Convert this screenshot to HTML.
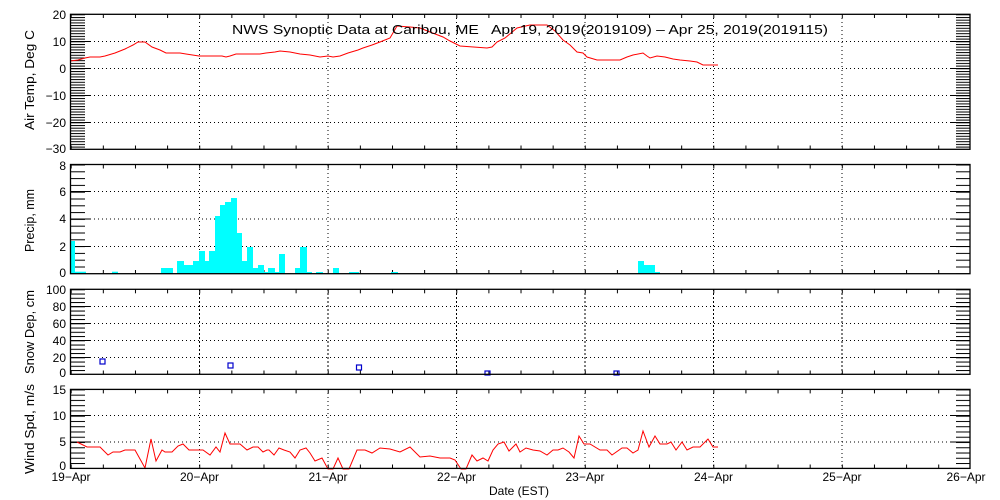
<!DOCTYPE html>
<html><head><meta charset="utf-8"><style>
html,body{margin:0;padding:0;background:#fff;}
svg{display:block;font-family:"Liberation Sans",sans-serif;}
text{font-size:12px;fill:#000;}
</style></head><body>
<svg width="1000" height="500" viewBox="0 0 1000 500" xmlns="http://www.w3.org/2000/svg">
<defs>
<pattern id="p1" patternUnits="userSpaceOnUse" x="0" y="14.3" width="20" height="2.7"><rect x="0" y="0" width="20" height="1" fill="#000"/></pattern>
<pattern id="p2" patternUnits="userSpaceOnUse" x="0" y="164.5" width="20" height="6.8"><rect x="0" y="0" width="20" height="1" fill="#000"/></pattern>
<pattern id="p3" patternUnits="userSpaceOnUse" x="0" y="289.3" width="20" height="4.25"><rect x="0" y="0" width="20" height="1" fill="#000"/></pattern>
<pattern id="p4" patternUnits="userSpaceOnUse" x="0" y="389.4" width="20" height="5.26"><rect x="0" y="0" width="20" height="1" fill="#000"/></pattern>
<pattern id="xt" patternUnits="userSpaceOnUse" x="70.7" y="0" width="32.13" height="10"><rect x="0" y="0" width="1" height="10" fill="#000"/></pattern>
</defs>

<rect x="71" y="14.3" width="14" height="135" fill="url(#p1)"/>
<rect x="956" y="14.3" width="14" height="135" fill="url(#p1)"/>
<rect x="71" y="164.5" width="14" height="109" fill="url(#p2)"/>
<rect x="956" y="164.5" width="14" height="109" fill="url(#p2)"/>
<rect x="71" y="289.3" width="14" height="85" fill="url(#p3)"/>
<rect x="956" y="289.3" width="14" height="85" fill="url(#p3)"/>
<rect x="71" y="389.4" width="14" height="79" fill="url(#p4)"/>
<rect x="956" y="389.4" width="14" height="79" fill="url(#p4)"/>

<rect x="70" y="14" width="900" height="4" fill="url(#xt)"/>
<rect x="70" y="145.5" width="900" height="4" fill="url(#xt)"/>
<rect x="70" y="164.5" width="900" height="4" fill="url(#xt)"/>
<rect x="70" y="270" width="900" height="4" fill="url(#xt)"/>
<rect x="70" y="289.3" width="900" height="4" fill="url(#xt)"/>
<rect x="70" y="370.5" width="900" height="4" fill="url(#xt)"/>
<rect x="70" y="389.4" width="900" height="4" fill="url(#xt)"/>
<rect x="70" y="464.5" width="900" height="4" fill="url(#xt)"/>

<g stroke="#000" stroke-width="1" stroke-dasharray="1,3" fill="none">
<path d="M70 41.5H970M70 68.5H970M70 95.5H970M70 122.5H970"/>
<path d="M70 191.5H970M70 219H970M70 246.5H970"/>
<path d="M70 306.5H970M70 323.5H970M70 340.5H970M70 357.5H970"/>
<path d="M70 415.5H970M70 442H970"/>
<path d="M199.5 14V149M328 14V149M456.5 14V149M585 14V149M713.5 14V149M842 14V149"/>
<path d="M199.5 165V274M328 165V274M456.5 165V274M585 165V274M713.5 165V274M842 165V274"/>
<path d="M199.5 389V468M328 389V468M456.5 389V468M585 389V468M713.5 389V468M842 389V468"/>
</g>
<g stroke="#000" stroke-width="1" stroke-dasharray="2,2" fill="none">
<path d="M199.5 289V374M328 289V374M456.5 289V374M585 289V374M713.5 289V374M842 289V374"/>
</g>

<g stroke="#000" stroke-width="1">
<path d="M70 41.5h20M70 68.5h20M70 95.5h20M70 122.5h20M950 41.5h20M950 68.5h20M950 95.5h20M950 122.5h20"/>
<path d="M70 191.5h20M70 219h20M70 246.5h20M950 191.5h20M950 219h20M950 246.5h20"/>
<path d="M70 306.5h20M70 323.5h20M70 340.5h20M70 357.5h20M950 306.5h20M950 323.5h20M950 340.5h20M950 357.5h20"/>
<path d="M70 415.5h20M70 442h20M950 415.5h20M950 442h20"/>
</g>

<g fill="#00ffff">
<rect x="70" y="241" width="5" height="33"/>
<rect x="75" y="271.7" width="11" height="2"/>
<rect x="112" y="271.7" width="6" height="2"/>
<rect x="161" y="268" width="12" height="6"/>
<rect x="177" y="261" width="7" height="13"/>
<rect x="184" y="265" width="9" height="9"/>
<rect x="193" y="261" width="6" height="13"/>
<rect x="199" y="251" width="6" height="23"/>
<rect x="205" y="261" width="4" height="13"/>
<rect x="209" y="251" width="6" height="23"/>
<rect x="215" y="216" width="5" height="58"/>
<rect x="220" y="205" width="5" height="69"/>
<rect x="225" y="202" width="6" height="72"/>
<rect x="231" y="198" width="6" height="76"/>
<rect x="237" y="233" width="5" height="41"/>
<rect x="242" y="261" width="5" height="13"/>
<rect x="247" y="247" width="6" height="27"/>
<rect x="253" y="268" width="5" height="6"/>
<rect x="258" y="265" width="6" height="9"/>
<rect x="264" y="272" width="4" height="2"/>
<rect x="268" y="268" width="7" height="6"/>
<rect x="275" y="272" width="4" height="2"/>
<rect x="279" y="254" width="6" height="20"/>
<rect x="295" y="268" width="5" height="6"/>
<rect x="300" y="247" width="7" height="27"/>
<rect x="307" y="272" width="5" height="2"/>
<rect x="316" y="272" width="7" height="2"/>
<rect x="333" y="268" width="6" height="6"/>
<rect x="349" y="272" width="10" height="2"/>
<rect x="391" y="272" width="7" height="2"/>
<rect x="638" y="261" width="6" height="13"/>
<rect x="644" y="265" width="11" height="9"/>
<rect x="655" y="272" width="5" height="2"/>
</g>

<polyline fill="none" stroke="#ff0000" stroke-width="1" points="70,61 78,60 85,58 90,57 100,57 105,56 115,53 125,49 133,45 138,42 145,42 152,47 160,50 166,53 180,53 186,54 199,56 222,56 226,57 230,56 236,54 260,54 266,53 275,52 280,51 290,52 300,54 310,55 320,57 328,56 333,57 340,56 348,53 358,50 363,48 372,45 380,42 390,38 397,26 410,27 420,28 430,32 443,37 450,41 460,46 487,48 492,47 497,42 505,38 517,28 530,25 547,25 555,31 563,40 570,45 577,52 583,53 587,57 597,60 620,60 627,57 633,55 643,53 647,56 650,58 657,56 665,57 673,59 680,60 690,61 697,62 703,65 718,65"/>

<g fill="none" stroke="#0000cc" stroke-width="1.2">
<rect x="100" y="359" width="5" height="5"/>
<rect x="228" y="363" width="5" height="5"/>
<rect x="356.5" y="365" width="5" height="5"/>
<rect x="485" y="371" width="5" height="4"/>
<rect x="614" y="371" width="5" height="4"/>
</g>

<polyline fill="none" stroke="#ff0000" stroke-width="1" points="77,442 87,447 100,447 108,455 113,452 120,452 125,450 135,450 145,468 151,439 156,461 162,450 165,452 172,452 178,446 183,444 189,450 203,450 210,455 216,447 220,452 225,433 230,444 240,444 247,450 253,447 258,447 263,452 267,450 269,450 274,455 279,448 284,450 290,452 295,458 300,450 306,448 310,453 315,461 322,458 328,469 333,469 338,458 343,469 349,469 357,450 365,450 372,453 380,448 390,449 400,452 410,447 420,457 430,456 440,458 450,458 455,460 461,469 466,469 472,455 477,461 483,458 488,461 493,450 498,444 504,442 509,451 516,444 520,452 526,448 533,450 540,451 547,455 553,450 558,450 563,448 569,452 574,458 579,436 584,444 590,444 600,450 607,450 612,455 622,448 627,448 633,453 638,450 643,431 649,447 655,436 660,444 667,444 671,442 676,450 682,442 687,450 693,447 700,447 708,439 713,447 718,447"/>

<g fill="none" stroke="#000" stroke-width="1.3">
<rect x="70.5" y="14.3" width="899.5" height="135"/>
<rect x="70.5" y="164.5" width="899.5" height="109.2"/>
<rect x="70.5" y="289.3" width="899.5" height="85"/>
<rect x="70.5" y="389.4" width="899.5" height="79"/>
</g>

<text x="232" y="34" textLength="596" lengthAdjust="spacingAndGlyphs" style="font-size:13px;white-space:pre" xml:space="preserve">NWS Synoptic Data at Caribou, ME   Apr 19, 2019(2019109) – Apr 25, 2019(2019115)</text>

<g text-anchor="end">
<text x="66" y="19">20</text><text x="66" y="46">10</text><text x="66" y="73">0</text>
<text x="66" y="100">−10</text><text x="66" y="127">−20</text><text x="66" y="153">−30</text>
<text x="66" y="170">8</text><text x="66" y="196">6</text><text x="66" y="223">4</text>
<text x="66" y="251">2</text><text x="66" y="277">0</text>
<text x="66" y="294">100</text><text x="66" y="311">80</text><text x="66" y="328">60</text>
<text x="66" y="345">40</text><text x="66" y="362">20</text><text x="66" y="377">0</text>
<text x="66" y="394">15</text><text x="66" y="420">10</text><text x="66" y="446">5</text>
<text x="66" y="470">0</text>
</g>

<g style="font-size:13px">
<text transform="translate(34,130) rotate(-90)" textLength="100" lengthAdjust="spacingAndGlyphs" style="font-size:13px">Air Temp, Deg C</text>
<text transform="translate(34,252) rotate(-90)" textLength="63" lengthAdjust="spacingAndGlyphs" style="font-size:13px">Precip, mm</text>
<text transform="translate(34,374) rotate(-90)" textLength="84" lengthAdjust="spacingAndGlyphs" style="font-size:13px">Snow Dep, cm</text>
<text transform="translate(34,474) rotate(-90)" textLength="90" lengthAdjust="spacingAndGlyphs" style="font-size:13px">Wind Spd, m/s</text>
</g>

<g text-anchor="middle">
<text x="71" y="481">19−Apr</text>
<text x="199.5" y="481">20−Apr</text>
<text x="328" y="481">21−Apr</text>
<text x="456.5" y="481">22−Apr</text>
<text x="585" y="481">23−Apr</text>
<text x="713.5" y="481">24−Apr</text>
<text x="842" y="481">25−Apr</text>
<text x="966" y="481">26−Apr</text>
<text x="519" y="495">Date (EST)</text>
</g>
</svg>
</body></html>
